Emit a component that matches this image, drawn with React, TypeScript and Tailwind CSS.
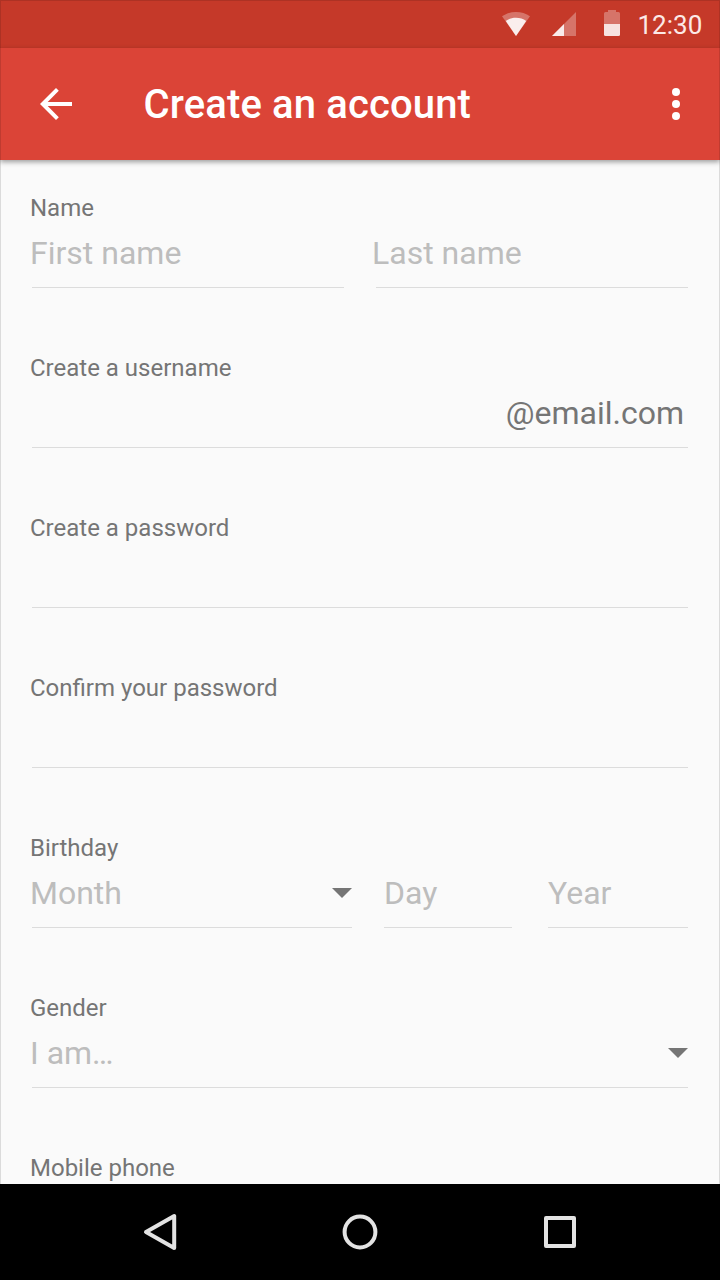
import type { ReactNode } from "react";

const label = "h-8 text-[24px] leading-[32px] text-[#757575] -ml-[2px] whitespace-nowrap";
const line = "flex h-16 border-b border-[#dcdcdc] pt-[9px] text-[32px] leading-[40px]";

function Section({ title, children }: { title: string; children?: ReactNode }) {
  return (
    <section className="h-40 shrink-0">
      <h2 className={label}>{title}</h2>
      <div className="flex">{children}</div>
    </section>
  );
}

function Caret() {
  return (
    <svg className="ml-auto mt-[15px]" width="20" height="10" viewBox="0 0 20 10" fill="#757575">
      <path d="M0 0H20L10 10Z" />
    </svg>
  );
}

function StatusBar() {
  return (
    <div className="flex h-12 shrink-0 bg-[#c53929] text-[#fce9e7]">
      <svg className="ml-[502px] mt-3" width="28" height="24" viewBox="0 0 28 24" fill="#fff">
        <path opacity=".3" d="M0 4.3C4 1.4 8.8 0 14 0s10 1.4 14 4.3L14 24Z" />
        <path opacity=".88" d="M3.8 9C6.6 6.9 10.2 5.8 14 5.8S21.4 6.9 24.2 9L14 24Z" />
      </svg>
      <svg className="ml-[22px] mt-3" width="24" height="24" viewBox="0 0 24 24" fill="#fff">
        <path opacity=".3" d="M0 24H24V0Z" />
        <path opacity=".86" d="M0 24H12V12Z" />
      </svg>
      <svg className="ml-7 mt-[10px]" width="16" height="26" viewBox="0 0 16 26" fill="#fff">
        <path opacity=".3" d="M4 0H12V2H14.5Q16 2 16 3.5V14H0V3.5Q0 2 1.5 2H4Z" />
        <path opacity=".86" d="M0 14H16V24.5Q16 26 14.5 26H1.5Q0 26 0 24.5Z" />
      </svg>
      <span className="ml-[17.5px] mt-[9px] text-[26px] leading-[32px]">12:30</span>
    </div>
  );
}

function AppBar() {
  return (
    <header className="relative z-10 flex h-28 shrink-0 items-center bg-[#db4437] text-white shadow-[0_2px_5px_rgba(0,0,0,0.38)]">
      <svg className="ml-10" width="33" height="32" viewBox="0 0 33 32" fill="#fff">
        <path d="M32 14H7.7L18.8 2.8 16 0 0 16 16 32 18.8 29.2 7.7 18H32Z" />
      </svg>
      <h1 className="ml-[70.5px] mt-[2px] whitespace-nowrap text-[40px] leading-[48px] font-medium tracking-[0.14px]">Create an account</h1>
      <svg className="ml-auto mr-10" width="8" height="32" viewBox="0 0 8 32" fill="#fff">
        <circle cx="4" cy="4" r="4" />
        <circle cx="4" cy="16" r="4" />
        <circle cx="4" cy="28" r="4" />
      </svg>
    </header>
  );
}

function NavBar() {
  return (
    <nav className="flex h-24 shrink-0 items-center bg-black">
      <svg className="ml-[143px]" width="34" height="38" viewBox="0 0 34 38" fill="none" stroke="#e3e3e3" strokeWidth="4" strokeLinejoin="round">
        <path d="M31.2 3V35L3 19Z" />
      </svg>
      <svg className="ml-[165px]" width="36" height="36" viewBox="0 0 36 36" fill="none" stroke="#e3e3e3" strokeWidth="4">
        <circle cx="18" cy="18" r="15.4" />
      </svg>
      <svg className="ml-[166px]" width="32" height="32" viewBox="0 0 32 32" fill="none" stroke="#e3e3e3" strokeWidth="4" strokeLinejoin="round">
        <path d="M2 2H30V30H2Z" />
      </svg>
    </nav>
  );
}

export default function App() {
  return (
    <div className="relative flex h-[1280px] w-[720px] flex-col overflow-hidden bg-[#fafafa] font-['Roboto',sans-serif]">
      <StatusBar />
      <AppBar />
      <main className="flex min-h-0 flex-1 flex-col overflow-hidden px-8 pt-8 text-[#bdbdbd]">
        <Section title="Name">
          <div className={`${line} w-[312px]`}><span className="-ml-[2px]">First name</span></div>
          <div className={`${line} ml-8 w-[312px]`}><span className="-ml-[4px]">Last name</span></div>
        </Section>
        <Section title="Create a username">
          <div className={`${line} w-full justify-end pr-[4px] text-[#757575]`}>@email.com</div>
        </Section>
        <Section title="Create a password">
          <div className={`${line} w-full`} />
        </Section>
        <Section title="Confirm your password">
          <div className={`${line} w-full`} />
        </Section>
        <Section title="Birthday">
          <div className={`${line} w-80`}><span className="-ml-[2px]">Month</span><Caret /></div>
          <div className={`${line} ml-8 w-32`}>Day</div>
          <div className={`${line} ml-9 w-[140px]`}>Year</div>
        </Section>
        <Section title="Gender">
          <div className={`${line} w-full`}><span className="-ml-[2px]">I am…</span><Caret /></div>
        </Section>
        <Section title="Mobile phone" />
      </main>
      <NavBar />
      <div className="pointer-events-none absolute inset-0 z-20 border border-black/12" />
    </div>
  );
}
